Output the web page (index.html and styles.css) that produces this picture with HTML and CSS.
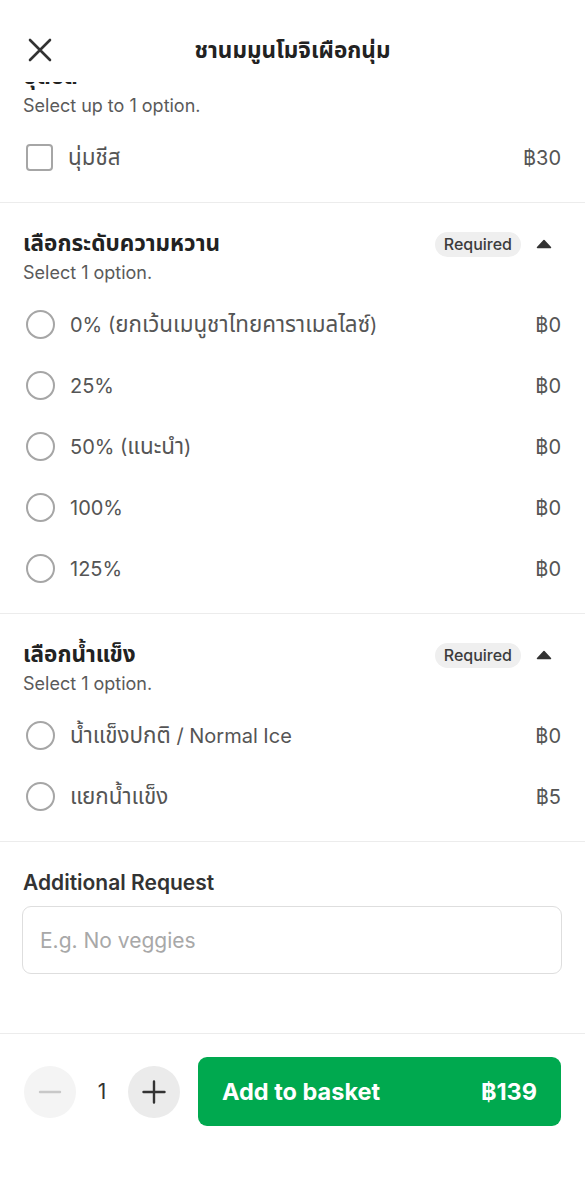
FILE: index.html
```html
<!DOCTYPE html>
<html lang="th">
<head>
    <meta charset="UTF-8">
    <meta name="viewport" content="width=device-width, initial-scale=1.0">
    <title>ชานมมูนโมจิเผือกนุ่ม</title>
    <link rel="stylesheet" href="styles.css">
</head>
<body>
    <div class="page">
        <header class="topbar">
            <button class="close-btn" aria-label="Close">
                <svg width="26" height="26" viewBox="0 0 26 26"><path d="M3 3 L23 23 M23 3 L3 23" stroke="#333" stroke-width="2.6" stroke-linecap="round"/></svg>
            </button>
            <h1 class="title">ชานมมูนโมจิเผือกนุ่ม</h1>
        </header>

        <main class="content">
            <section class="group">
                <div class="group-head">
                    <h2>ชุดชีส</h2>
                </div>
                <p class="hint">Select up to 1 option.</p>
                <div class="options">
                    <label class="option">
                        <span class="box"></span>
                        <span class="name"><span class="th">นุ่มชีส</span></span>
                        <span class="price">฿30</span>
                    </label>
                </div>
            </section>

            <section class="group">
                <div class="group-head">
                    <h2>เลือกระดับความหวาน</h2>
                    <span class="badge">Required</span>
                    <svg class="caret" width="16" height="10" viewBox="0 0 16 10"><path d="M8 1.5 L14.5 8.5 L1.5 8.5 Z" fill="#333" stroke="#333" stroke-width="1.5" stroke-linejoin="round"/></svg>
                </div>
                <p class="hint">Select 1 option.</p>
                <div class="options">
                    <label class="option"><span class="radio"></span><span class="name">0% (<span class="th">ยกเว้นเมนูชาไทยคาราเมลไลซ์</span>)</span><span class="price">฿0</span></label>
                    <label class="option"><span class="radio"></span><span class="name">25%</span><span class="price">฿0</span></label>
                    <label class="option"><span class="radio"></span><span class="name">50% (<span class="th">แนะนำ</span>)</span><span class="price">฿0</span></label>
                    <label class="option"><span class="radio"></span><span class="name">100%</span><span class="price">฿0</span></label>
                    <label class="option"><span class="radio"></span><span class="name">125%</span><span class="price">฿0</span></label>
                </div>
            </section>

            <section class="group">
                <div class="group-head">
                    <h2>เลือกน้ำแข็ง</h2>
                    <span class="badge">Required</span>
                    <svg class="caret" width="16" height="10" viewBox="0 0 16 10"><path d="M8 1.5 L14.5 8.5 L1.5 8.5 Z" fill="#333" stroke="#333" stroke-width="1.5" stroke-linejoin="round"/></svg>
                </div>
                <p class="hint">Select 1 option.</p>
                <div class="options">
                    <label class="option"><span class="radio"></span><span class="name"><span class="th">น้ำแข็งปกติ</span> / Normal Ice</span><span class="price">฿0</span></label>
                    <label class="option"><span class="radio"></span><span class="name"><span class="th">แยกน้ำแข็ง</span></span><span class="price">฿5</span></label>
                </div>
            </section>

            <section class="request">
                <h2>Additional Request</h2>
                <input type="text" class="request-input" placeholder="E.g. No veggies">
            </section>
        </main>

        <footer class="bottom">
            <button class="qty-btn minus" aria-label="Decrease">
                <svg width="24" height="24" viewBox="0 0 24 24"><path d="M2 12 H22" stroke="#c8c8c8" stroke-width="2.4" stroke-linecap="round"/></svg>
            </button>
            <span class="qty">1</span>
            <button class="qty-btn plus" aria-label="Increase">
                <svg width="24" height="24" viewBox="0 0 24 24"><path d="M1.5 12 H22.5 M12 1.5 V22.5" stroke="#333" stroke-width="2.4" stroke-linecap="round"/></svg>
            </button>
            <button class="add-btn">
                <span>Add to basket</span>
                <span>฿139</span>
            </button>
        </footer>
    </div>
</body>
</html>
```

FILE: styles.css
```css
body {
    margin: 0;
    background-color: #fff;
    color: #333;
    font-family: Inter, "Noto Sans", "Noto Sans Thai", "DejaVu Sans", sans-serif;
}
.page {
    position: relative;
    width: 585px;
    min-height: 1200px;
}
button {
    font-family: inherit;
    border: none;
    background: none;
    padding: 0;
    cursor: pointer;
}

/* header sits over the scrolled list */
.topbar {
    position: absolute;
    top: 0;
    left: 0;
    right: 0;
    height: 82px;
    background: #fff;
    z-index: 2;
}
.close-btn {
    position: absolute;
    left: 27px;
    top: 37px;
    width: 26px;
    height: 26px;
}
.title {
    margin: 0;
    padding-top: 35px;
    text-align: center;
    font-size: 22.5px;
    font-weight: 700;
    line-height: 30px;
    color: #222;
}

/* thai glyphs render small in the fallback font */
.th {
    font-size: 1.12em;
}

.content {
    padding-top: 36px;
}
.group {
    padding: 27px 24px 14px 23px;
    border-bottom: 1px solid #ececec;
}
.group-head {
    display: flex;
    align-items: center;
    height: 28px;
}
.group-head h2 {
    flex: 1;
    margin: 0;
    font-size: 22.5px;
    font-weight: 700;
    color: #222;
}
.badge {
    background: #efefef;
    border-radius: 13px;
    padding: 0 9px;
    height: 25px;
    line-height: 25px;
    font-size: 16px;
    font-weight: 500;
    color: #3c3c3c;
}
.caret {
    margin-left: 15px;
    margin-right: 9px;
}
.hint {
    margin: 4px 0 0;
    font-size: 18px;
    line-height: 22px;
    color: #5a5a5a;
}
.options {
    padding-top: 10px;
}
.option {
    display: flex;
    align-items: center;
    height: 61px;
    font-size: 20px;
    line-height: 28px;
    color: #555;
}
.box, .radio {
    flex: none;
    box-sizing: border-box;
    border: 2.5px solid #a6a6a6;
    margin-left: 3px;
    margin-right: 15px;
}
.box {
    width: 27px;
    height: 27px;
    border-radius: 4px;
}
.radio {
    width: 29px;
    height: 29px;
    border-radius: 50%;
}
.name {
    flex: 1;
}
.price {
    color: #555;
}

.request {
    padding: 27px 22px 0 23px;
}
.request h2 {
    margin: 0;
    font-size: 21px;
    font-weight: 600;
    line-height: 28px;
    color: #333;
}
.request-input {
    display: block;
    box-sizing: border-box;
    width: 100%;
    height: 68px;
    margin-top: 9px;
    margin-left: -1px;
    padding: 0 17px;
    border: 1.5px solid #dedede;
    border-radius: 9px;
    font-family: inherit;
    font-size: 21px;
    color: #333;
    outline: none;
}
.request-input::placeholder {
    color: #a8a8a8;
}

.bottom {
    display: flex;
    align-items: center;
    margin-top: 59px;
    border-top: 1px solid #ececec;
    padding: 23px 24px 0 24px;
}
.qty-btn {
    width: 52px;
    height: 52px;
    border-radius: 50%;
    display: flex;
    align-items: center;
    justify-content: center;
}
.minus {
    background: #f4f4f4;
}
.plus {
    background: #ebebeb;
}
.qty {
    width: 52px;
    text-align: center;
    font-size: 21px;
    color: #333;
}
.add-btn {
    flex: 1;
    margin-left: 18px;
    height: 69px;
    border-radius: 9px;
    background: #00a94f;
    color: #fff;
    display: flex;
    align-items: center;
    justify-content: space-between;
    padding: 0 24px;
    font-size: 23.5px;
    font-weight: 700;
}
```
